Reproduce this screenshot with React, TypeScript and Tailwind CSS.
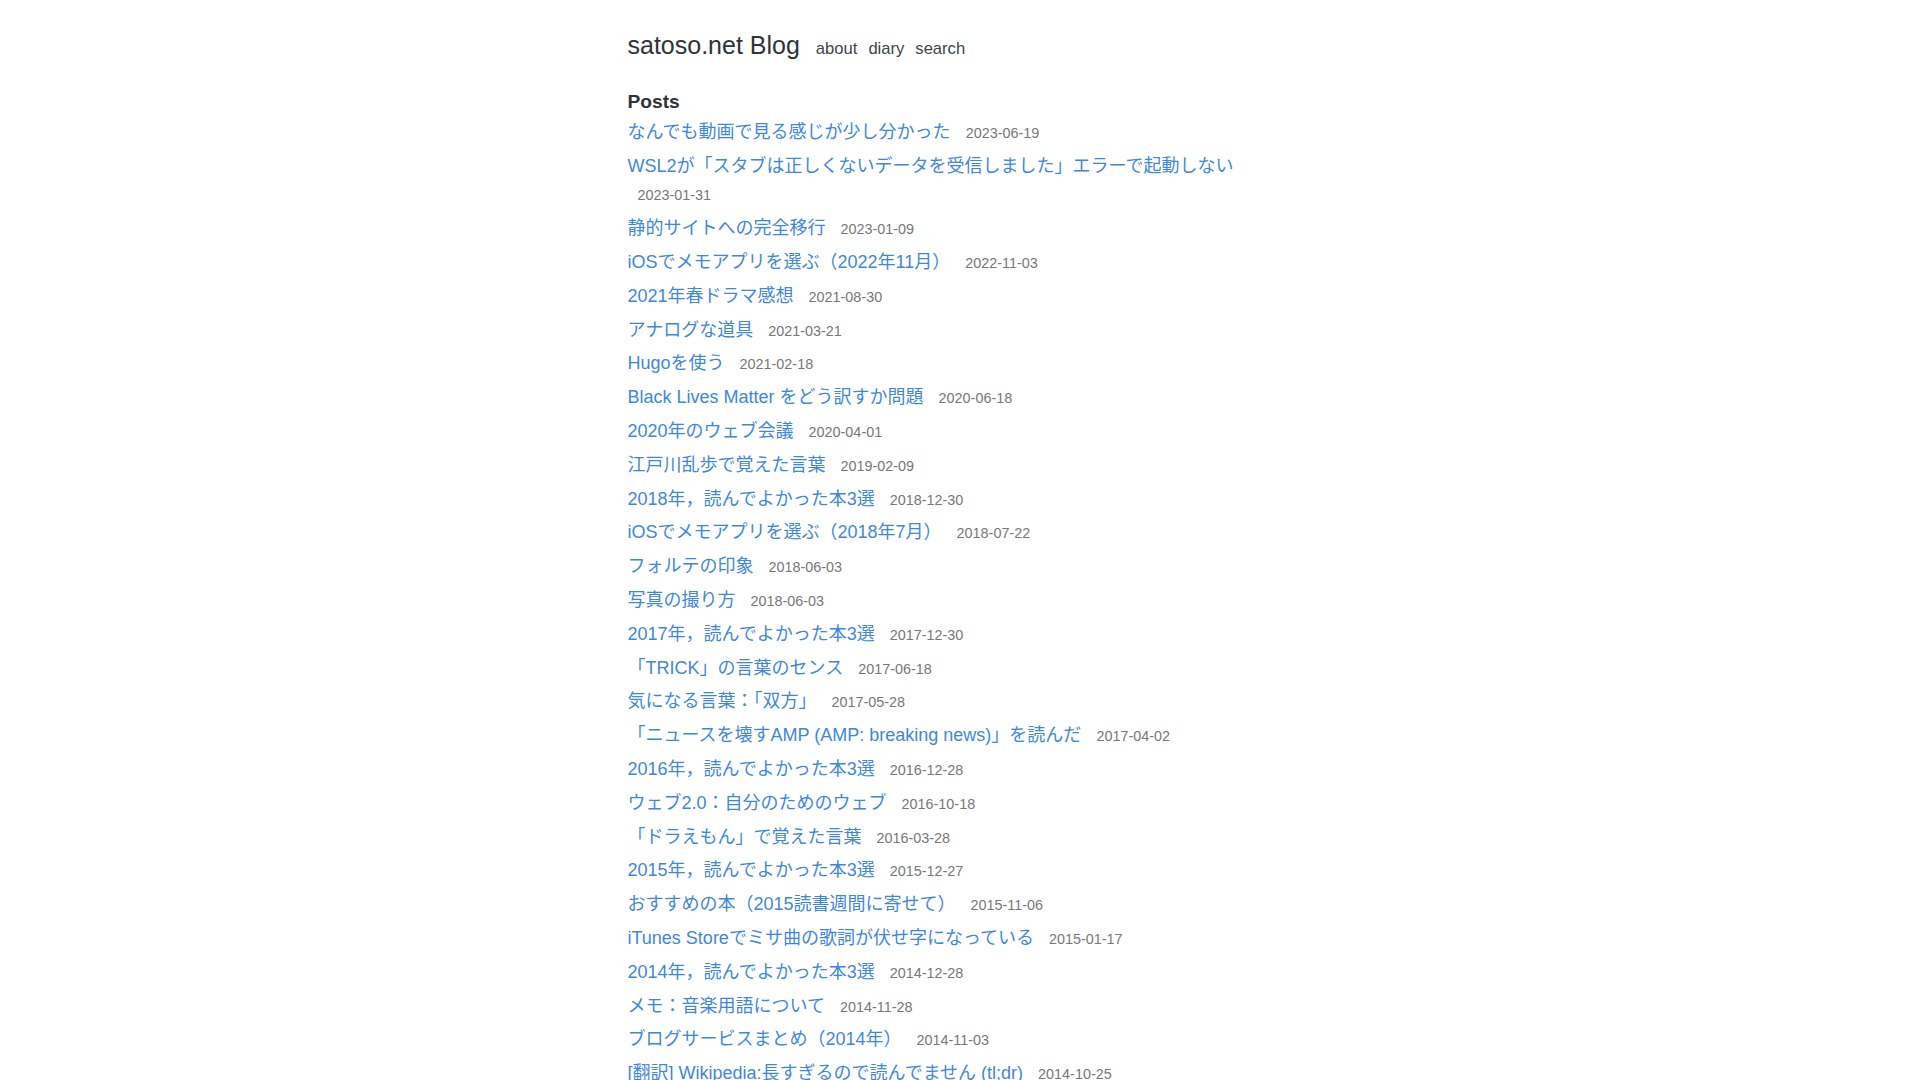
import React from "react";

const posts: [string, string][] = [
  ["なんでも動画で見る感じが少し分かった", "2023-06-19"],
  ["WSL2が「スタブは正しくないデータを受信しました」エラーで起動しない", "2023-01-31"],
  ["静的サイトへの完全移行", "2023-01-09"],
  ["iOSでメモアプリを選ぶ（2022年11月）", "2022-11-03"],
  ["2021年春ドラマ感想", "2021-08-30"],
  ["アナログな道具", "2021-03-21"],
  ["Hugoを使う", "2021-02-18"],
  ["Black Lives Matter をどう訳すか問題", "2020-06-18"],
  ["2020年のウェブ会議", "2020-04-01"],
  ["江戸川乱歩で覚えた言葉", "2019-02-09"],
  ["2018年，読んでよかった本3選", "2018-12-30"],
  ["iOSでメモアプリを選ぶ（2018年7月）", "2018-07-22"],
  ["フォルテの印象", "2018-06-03"],
  ["写真の撮り方", "2018-06-03"],
  ["2017年，読んでよかった本3選", "2017-12-30"],
  ["「TRICK」の言葉のセンス", "2017-06-18"],
  ["気になる言葉：「双方」", "2017-05-28"],
  ["「ニュースを壊すAMP (AMP: breaking news)」を読んだ", "2017-04-02"],
  ["2016年，読んでよかった本3選", "2016-12-28"],
  ["ウェブ2.0：自分のためのウェブ", "2016-10-18"],
  ["「ドラえもん」で覚えた言葉", "2016-03-28"],
  ["2015年，読んでよかった本3選", "2015-12-27"],
  ["おすすめの本（2015読書週間に寄せて）", "2015-11-06"],
  ["iTunes Storeでミサ曲の歌詞が伏せ字になっている", "2015-01-17"],
  ["2014年，読んでよかった本3選", "2014-12-28"],
  ["メモ：音楽用語について", "2014-11-28"],
  ["ブログサービスまとめ（2014年）", "2014-11-03"],
  ["[翻訳] Wikipedia:長すぎるので読んでません (tl;dr)", "2014-10-25"],
];

export default function App() {
  return (
    <div
      className="h-screen overflow-y-scroll bg-white pr-[15px] text-[#2f3437]"
      style={{ fontFamily: '"Liberation Sans", Arial, "Noto Sans CJK JP", sans-serif' }}
    >
      <main className="mx-auto w-[650px] pt-[30px] pb-[104px]">
        <header className="flex items-baseline">
          <h1 className="text-[25px] leading-[30px] font-normal text-[#2f3437]">satoso.net Blog</h1>
          <nav className="ml-[16px] flex items-baseline gap-[11px] text-[16.6px] text-[#404548]">
            <a href="#">about</a>
            <a href="#">diary</a>
            <a href="#">search</a>
          </nav>
        </header>
        <h2 className="mt-[28px] text-[19.2px] leading-[23px] font-bold text-[#2f3437]">Posts</h2>
        <ul className="mt-[5px]">
          {posts.map(([title, date]) => (
            <li key={title + date} className="mb-[5px] text-[18px] leading-[28.8px]">
              <a href="#" className="text-[#3f87dc]">
                {title}
              </a>{" "}
              <span className="ml-[10px] text-[14.4px] leading-none text-[#777777]">{date}</span>
            </li>
          ))}
        </ul>
      </main>
    </div>
  );
}
